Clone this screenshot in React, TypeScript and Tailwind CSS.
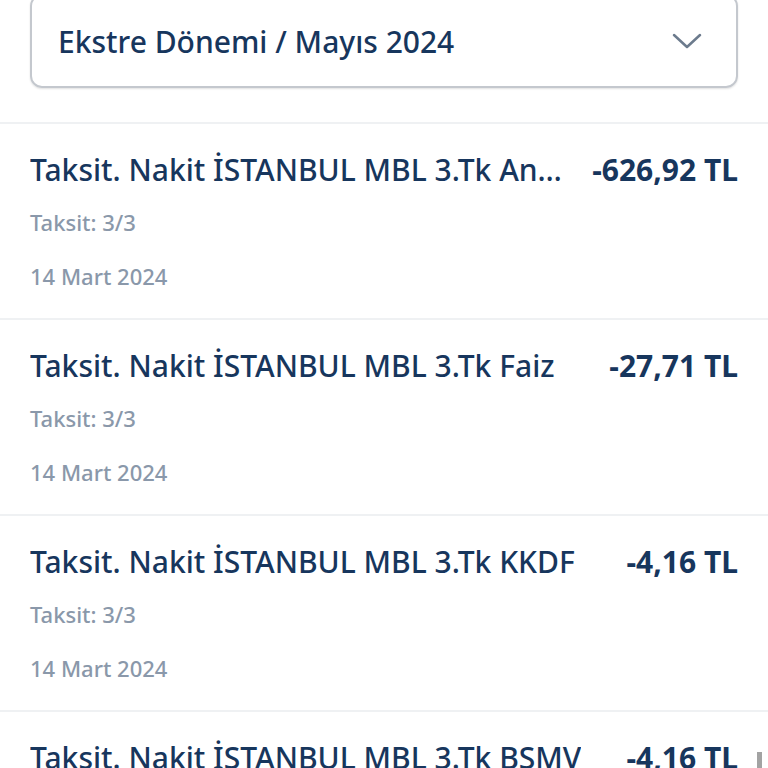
const rows = [
  { title: "Taksit. Nakit İSTANBUL MBL 3.Tk Anapara", amount: "-626,92 TL" },
  { title: "Taksit. Nakit İSTANBUL MBL 3.Tk Faiz", amount: "-27,71 TL" },
  { title: "Taksit. Nakit İSTANBUL MBL 3.Tk KKDF", amount: "-4,16 TL" },
  { title: "Taksit. Nakit İSTANBUL MBL 3.Tk BSMV", amount: "-4,16 TL" },
];

export default function App() {
  return (
    <div className="relative h-[768px] w-[768px] overflow-hidden bg-white font-['Noto_Sans',sans-serif]">
      <div className="px-[30px] pb-[34px]">
        <div className="-mt-[6px] flex h-[94px] items-center justify-between rounded-[12px] border-2 border-[#c4c8ce] pl-[26px] pr-[34px] shadow-[0_1px_2px_rgba(0,0,0,0.12)]">
          <span className="text-[30px] font-medium text-[#17365d]">
            Ekstre Dönemi / Mayıs 2024
          </span>
          <svg width="30" height="16" viewBox="0 0 30 16" fill="none">
            <path d="M2 2 L15 14 L28 2" stroke="#6c7b8d" strokeWidth="2.5" strokeLinecap="round" strokeLinejoin="round" />
          </svg>
        </div>
      </div>

      {rows.map((r) => (
        <div key={r.amount + r.title} className="border-t-2 border-[#eff1f3] px-[30px] pt-[26px] pb-[27px]">
          <div className="flex h-[38px] items-center justify-between gap-[18px]">
            <span className="min-w-0 truncate text-[30px] font-medium text-[#17365d]">{r.title}</span>
            <span className="shrink-0 text-[30px] font-bold text-[#17365d]">{r.amount}</span>
          </div>
          <div className="mt-[19px] flex h-[30px] items-center text-[22px] font-medium text-[#8a98aa]">Taksit: 3/3</div>
          <div className="mt-[24px] flex h-[30px] items-center text-[22px] font-medium text-[#8a98aa]">14 Mart 2024</div>
        </div>
      ))}

      <div className="absolute right-[6px] bottom-0 h-[16px] w-[5px] bg-[#a3a3a3]" />
    </div>
  );
}
